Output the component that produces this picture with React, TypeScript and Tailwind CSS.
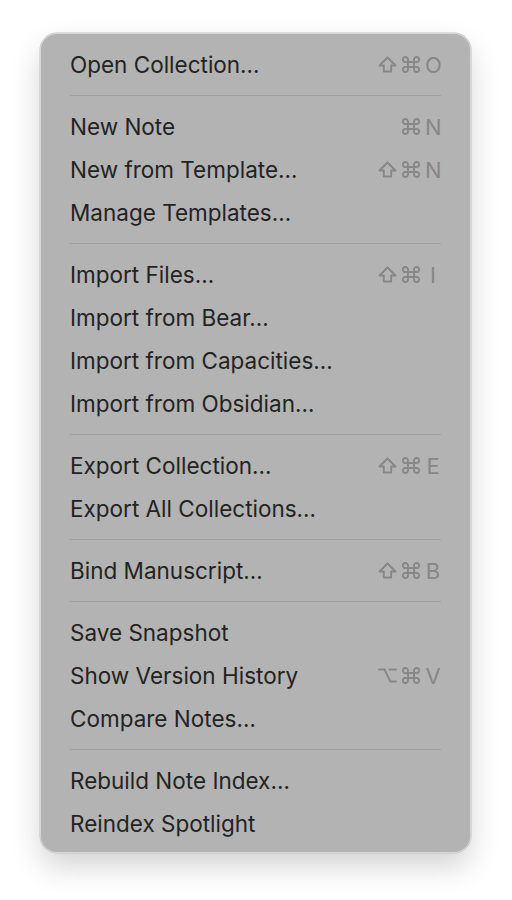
import React from "react";

type Item = { label: string; keys?: string[] };

const groups: Item[][] = [
  [{ label: "Open Collection…", keys: ["shift", "cmd", "O"] }],
  [
    { label: "New Note", keys: ["cmd", "N"] },
    { label: "New from Template…", keys: ["shift", "cmd", "N"] },
    { label: "Manage Templates…" },
  ],
  [
    { label: "Import Files…", keys: ["shift", "cmd", "I"] },
    { label: "Import from Bear…" },
    { label: "Import from Capacities…" },
    { label: "Import from Obsidian…" },
  ],
  [
    { label: "Export Collection…", keys: ["shift", "cmd", "E"] },
    { label: "Export All Collections…" },
  ],
  [{ label: "Bind Manuscript…", keys: ["shift", "cmd", "B"] }],
  [
    { label: "Save Snapshot" },
    { label: "Show Version History", keys: ["opt", "cmd", "V"] },
    { label: "Compare Notes…" },
  ],
  [{ label: "Rebuild Note Index…" }, { label: "Reindex Spotlight" }],
];

function ShiftIcon() {
  return (
    <svg width="19" height="17" viewBox="0 0 19 17" fill="none" stroke="currentColor" strokeWidth="1.9" strokeLinejoin="round">
      <path d="M9.5 1.5 L17.5 9.5 H13.2 V15.5 H5.8 V9.5 H1.5 Z" />
    </svg>
  );
}

function CmdIcon() {
  return (
    <svg width="18" height="17" viewBox="0 0 18 17" fill="none" stroke="currentColor" strokeWidth="1.9">
      <path d="M6 6 H12 V11 H6 Z" />
      <path d="M6 6 H4.3 A2.6 2.6 0 1 1 6 3.4 Z" />
      <path d="M12 6 H13.7 A2.6 2.6 0 1 0 12 3.4 Z" />
      <path d="M6 11 H4.3 A2.6 2.6 0 1 0 6 13.6 Z" />
      <path d="M12 11 H13.7 A2.6 2.6 0 1 1 12 13.6 Z" />
    </svg>
  );
}

function OptIcon() {
  return (
    <svg width="19" height="17" viewBox="0 0 19 17" fill="none" stroke="currentColor" strokeWidth="1.9" strokeLinecap="round">
      <path d="M1 2.5 H6.5 L12.5 14.5 H18" />
      <path d="M11.5 2.5 H18" />
    </svg>
  );
}

function Key({ k }: { k: string }) {
  if (k === "shift") return <ShiftIcon />;
  if (k === "cmd") return <CmdIcon />;
  if (k === "opt") return <OptIcon />;
  return <span className="w-[16px] text-center leading-none">{k}</span>;
}

export default function App() {
  return (
    <div className="min-h-[900px] bg-white pt-[34px] pl-[41px] font-['Inter',sans-serif]">
      <div className="w-[429px] rounded-[16px] bg-[#b3b3b3] px-[29px] pt-[9px] pb-[7px] shadow-[0_0_0_1px_#d6d6d6,0_0_0_1.5px_#c4c4c4,0_14px_30px_rgba(0,0,0,0.18)]">
        {groups.map((group, gi) => (
          <div key={gi}>
            {gi > 0 && (
              <div className="flex h-[19px] items-center">
                <div className="h-px w-full bg-[#9f9f9f]" />
              </div>
            )}
            {group.map((item) => (
              <div key={item.label} className="flex h-[43px] items-center justify-between">
                <span className="text-[22.5px] text-[#232323]">{item.label}</span>
                {item.keys && (
                  <span className="flex items-center gap-[5px] text-[22px] text-[#878787]">
                    {item.keys.map((k) => (
                      <Key key={k} k={k} />
                    ))}
                  </span>
                )}
              </div>
            ))}
          </div>
        ))}
      </div>
    </div>
  );
}
